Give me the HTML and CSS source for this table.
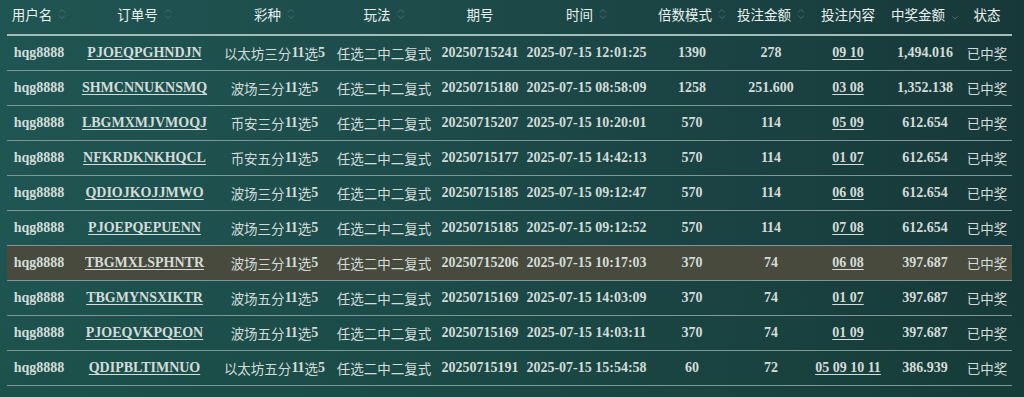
FILE: index.html
```html
<!DOCTYPE html>
<html lang="zh-CN">
<head>
<meta charset="utf-8">
<title>中奖记录</title>
<link rel="stylesheet" href="styles.css">
</head>
<body>
<div class="page">
  <div class="table">
    <div class="row head">
      <div class="cell"><span class="cn">用户名</span><svg class="sort" viewBox="0 0 8 14"><path d="M1 5.5 4 2.5 7 5.5M1 8.5 4 11.5 7 8.5"/></svg></div>
      <div class="cell"><span class="cn">订单号</span><svg class="sort" viewBox="0 0 8 14"><path d="M1 5.5 4 2.5 7 5.5M1 8.5 4 11.5 7 8.5"/></svg></div>
      <div class="cell"><span class="cn">彩种</span><svg class="sort" viewBox="0 0 8 14"><path d="M1 5.5 4 2.5 7 5.5M1 8.5 4 11.5 7 8.5"/></svg></div>
      <div class="cell"><span class="cn">玩法</span><svg class="sort" viewBox="0 0 8 14"><path d="M1 5.5 4 2.5 7 5.5M1 8.5 4 11.5 7 8.5"/></svg></div>
      <div class="cell"><span class="cn">期号</span></div>
      <div class="cell"><span class="cn">时间</span><svg class="sort" viewBox="0 0 8 14"><path d="M1 5.5 4 2.5 7 5.5M1 8.5 4 11.5 7 8.5"/></svg></div>
      <div class="cell"><span class="cn">倍数模式</span><svg class="sort" viewBox="0 0 8 14"><path d="M1 5.5 4 2.5 7 5.5M1 8.5 4 11.5 7 8.5"/></svg></div>
      <div class="cell"><span class="cn">投注金额</span><svg class="sort" viewBox="0 0 8 14"><path d="M1 5.5 4 2.5 7 5.5M1 8.5 4 11.5 7 8.5"/></svg></div>
      <div class="cell"><span class="cn">投注内容</span></div>
      <div class="cell"><span class="cn">中奖金额</span><svg class="sort" viewBox="0 0 8 14"><path d="M1.5 9.5 4 12 6.5 9.5"/></svg></div>
      <div class="cell"><span class="cn">状态</span></div>
    </div>

    <div class="row">
      <div class="cell">hqg8888</div>
      <div class="cell"><a class="link">PJOEQPGHNDJN</a></div>
      <div class="cell"><span class="cn">以太坊三分</span>11<span class="cn">选</span>5</div>
      <div class="cell"><span class="cn">任选二中二复式</span></div>
      <div class="cell">20250715241</div>
      <div class="cell">2025-07-15 12:01:25</div>
      <div class="cell">1390</div>
      <div class="cell">278</div>
      <div class="cell"><a class="link">09 10</a></div>
      <div class="cell">1,494.016</div>
      <div class="cell"><span class="cn">已中奖</span></div>
    </div>
    <div class="row">
      <div class="cell">hqg8888</div>
      <div class="cell"><a class="link">SHMCNNUKNSMQ</a></div>
      <div class="cell"><span class="cn">波场三分</span>11<span class="cn">选</span>5</div>
      <div class="cell"><span class="cn">任选二中二复式</span></div>
      <div class="cell">20250715180</div>
      <div class="cell">2025-07-15 08:58:09</div>
      <div class="cell">1258</div>
      <div class="cell">251.600</div>
      <div class="cell"><a class="link">03 08</a></div>
      <div class="cell">1,352.138</div>
      <div class="cell"><span class="cn">已中奖</span></div>
    </div>
    <div class="row">
      <div class="cell">hqg8888</div>
      <div class="cell"><a class="link">LBGMXMJVMOQJ</a></div>
      <div class="cell"><span class="cn">币安三分</span>11<span class="cn">选</span>5</div>
      <div class="cell"><span class="cn">任选二中二复式</span></div>
      <div class="cell">20250715207</div>
      <div class="cell">2025-07-15 10:20:01</div>
      <div class="cell">570</div>
      <div class="cell">114</div>
      <div class="cell"><a class="link">05 09</a></div>
      <div class="cell">612.654</div>
      <div class="cell"><span class="cn">已中奖</span></div>
    </div>
    <div class="row">
      <div class="cell">hqg8888</div>
      <div class="cell"><a class="link">NFKRDKNKHQCL</a></div>
      <div class="cell"><span class="cn">币安五分</span>11<span class="cn">选</span>5</div>
      <div class="cell"><span class="cn">任选二中二复式</span></div>
      <div class="cell">20250715177</div>
      <div class="cell">2025-07-15 14:42:13</div>
      <div class="cell">570</div>
      <div class="cell">114</div>
      <div class="cell"><a class="link">01 07</a></div>
      <div class="cell">612.654</div>
      <div class="cell"><span class="cn">已中奖</span></div>
    </div>
    <div class="row">
      <div class="cell">hqg8888</div>
      <div class="cell"><a class="link">QDIOJKOJJMWO</a></div>
      <div class="cell"><span class="cn">波场三分</span>11<span class="cn">选</span>5</div>
      <div class="cell"><span class="cn">任选二中二复式</span></div>
      <div class="cell">20250715185</div>
      <div class="cell">2025-07-15 09:12:47</div>
      <div class="cell">570</div>
      <div class="cell">114</div>
      <div class="cell"><a class="link">06 08</a></div>
      <div class="cell">612.654</div>
      <div class="cell"><span class="cn">已中奖</span></div>
    </div>
    <div class="row">
      <div class="cell">hqg8888</div>
      <div class="cell"><a class="link">PJOEPQEPUENN</a></div>
      <div class="cell"><span class="cn">波场三分</span>11<span class="cn">选</span>5</div>
      <div class="cell"><span class="cn">任选二中二复式</span></div>
      <div class="cell">20250715185</div>
      <div class="cell">2025-07-15 09:12:52</div>
      <div class="cell">570</div>
      <div class="cell">114</div>
      <div class="cell"><a class="link">07 08</a></div>
      <div class="cell">612.654</div>
      <div class="cell"><span class="cn">已中奖</span></div>
    </div>
    <div class="row hover">
      <div class="cell">hqg8888</div>
      <div class="cell"><a class="link">TBGMXLSPHNTR</a></div>
      <div class="cell"><span class="cn">波场三分</span>11<span class="cn">选</span>5</div>
      <div class="cell"><span class="cn">任选二中二复式</span></div>
      <div class="cell">20250715206</div>
      <div class="cell">2025-07-15 10:17:03</div>
      <div class="cell">370</div>
      <div class="cell">74</div>
      <div class="cell"><a class="link">06 08</a></div>
      <div class="cell">397.687</div>
      <div class="cell"><span class="cn">已中奖</span></div>
    </div>
    <div class="row">
      <div class="cell">hqg8888</div>
      <div class="cell"><a class="link">TBGMYNSXIKTR</a></div>
      <div class="cell"><span class="cn">波场五分</span>11<span class="cn">选</span>5</div>
      <div class="cell"><span class="cn">任选二中二复式</span></div>
      <div class="cell">20250715169</div>
      <div class="cell">2025-07-15 14:03:09</div>
      <div class="cell">370</div>
      <div class="cell">74</div>
      <div class="cell"><a class="link">01 07</a></div>
      <div class="cell">397.687</div>
      <div class="cell"><span class="cn">已中奖</span></div>
    </div>
    <div class="row">
      <div class="cell">hqg8888</div>
      <div class="cell"><a class="link">PJOEQVKPQEON</a></div>
      <div class="cell"><span class="cn">波场五分</span>11<span class="cn">选</span>5</div>
      <div class="cell"><span class="cn">任选二中二复式</span></div>
      <div class="cell">20250715169</div>
      <div class="cell">2025-07-15 14:03:11</div>
      <div class="cell">370</div>
      <div class="cell">74</div>
      <div class="cell"><a class="link">01 09</a></div>
      <div class="cell">397.687</div>
      <div class="cell"><span class="cn">已中奖</span></div>
    </div>
    <div class="row">
      <div class="cell">hqg8888</div>
      <div class="cell"><a class="link">QDIPBLTIMNUO</a></div>
      <div class="cell"><span class="cn">以太坊五分</span>11<span class="cn">选</span>5</div>
      <div class="cell"><span class="cn">任选二中二复式</span></div>
      <div class="cell">20250715191</div>
      <div class="cell">2025-07-15 15:54:58</div>
      <div class="cell">60</div>
      <div class="cell">72</div>
      <div class="cell"><a class="link">05 09 10 11</a></div>
      <div class="cell">386.939</div>
      <div class="cell"><span class="cn">已中奖</span></div>
    </div>
  </div>
</div>
</body>
</html>
```
FILE: styles.css
```css
html, body {
  margin: 0;
  padding: 0;
}
body {
  width: 1024px;
  height: 397px;
  overflow: hidden;
  background:
    linear-gradient(180deg, rgba(0,0,0,0) 60%, rgba(20,70,55,0.25) 100%),
    linear-gradient(90deg, #1f5552 0%, #1d4c4b 40%, #1a4141 75%, #173838 100%);
  font-family: "Liberation Serif", "Noto Sans CJK SC", serif;
  color: #d3dcd9;
}
.page {
  padding: 0 12px 0 7px;
}
.table {
  width: 1005px;
}
.row {
  display: grid;
  grid-template-columns: 64px 147px 113px 106px 86px 127px 84px 74px 80px 74px 50px;
  height: 34px;
  border-bottom: 1px solid #7d9897;
  font-size: 14px;
  font-weight: 700;
}
.row.head {
  border-bottom: 2px solid #a3bcb9;
  padding-bottom: 6px;
  height: 28px;
  color: #e9f1ef;
  font-weight: 400;
}
.row.hover {
  background: #474a3c;
}
.cell {
  display: flex;
  align-items: center;
  justify-content: center;
  white-space: nowrap;
  min-width: 0;
}
.cn {
  font-family: "Noto Sans CJK SC", "Noto Sans", sans-serif;
  font-weight: 400;
  font-size: 13.5px;
}
.link {
  color: #d3dcd9;
  text-decoration: underline;
  text-underline-offset: 2px;
  text-decoration-thickness: 1px;
}
.sort {
  width: 8px;
  height: 14px;
  margin-left: 6px;
  fill: none;
  stroke: #4f6d6b;
  stroke-width: 1;
}
```
